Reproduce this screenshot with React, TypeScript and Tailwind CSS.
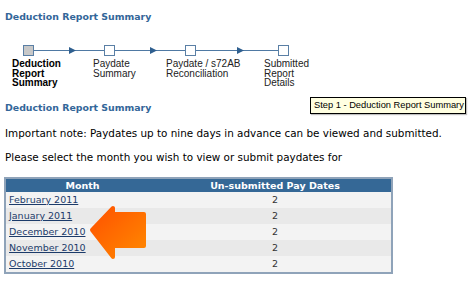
import React from 'react';

const steps = [
  { label: ['Deduction', 'Report', 'Summary'], active: true },
  { label: ['Paydate', 'Summary'], active: false },
  { label: ['Paydate / s72AB', 'Reconciliation'], active: false },
  { label: ['Submitted', 'Report', 'Details'], active: false },
];

const rows = ['February 2011', 'January 2011', 'December 2010', 'November 2010', 'October 2010'];

function Connector({ width }: { width: string }) {
  return (
    <div className={`relative flex items-center h-[11px] ${width}`}>
      <div className="h-px w-full bg-[#4f79a3]" />
      <svg className="absolute left-1/2 top-[2px]" width="7" height="7" viewBox="0 0 7 7">
        <polygon points="0,0 7,3.5 0,7" fill="#2f5f8f" />
      </svg>
    </div>
  );
}

function Square({ active }: { active: boolean }) {
  return (
    <div
      className={`w-[11px] h-[11px] border border-[#5a7fa5] ${active ? 'bg-[#c8c8c8]' : 'bg-white'}`}
    />
  );
}

export default function App() {
  return (
    <div className="relative w-[468px] h-[281px] bg-white overflow-hidden font-['DejaVu_Sans',sans-serif]">
      <div className="pl-[5px] pt-[10px]">
        <h1 className="text-[9.4px] leading-[14px] font-bold text-[#336699]">Deduction Report Summary</h1>

        {/* stepper */}
        <div className="mt-[21px] pl-[18px] flex items-center">
          <Square active />
          <Connector width="w-[70px]" />
          <Square active={false} />
          <Connector width="w-[70px]" />
          <Square active={false} />
          <Connector width="w-[82px]" />
          <Square active={false} />
        </div>
        <div className="mt-[3px] pl-[7px] flex font-['Liberation_Sans',Arial,sans-serif] text-[10px] leading-[9.5px] text-[#222]">
          <div className="w-[81px] font-bold text-black">
            {steps[0].label.map((l) => (
              <div key={l}>{l}</div>
            ))}
          </div>
          <div className="w-[73px]">
            {steps[1].label.map((l) => (
              <div key={l}>{l}</div>
            ))}
          </div>
          <div className="w-[98px]">
            {steps[2].label.map((l) => (
              <div key={l}>{l}</div>
            ))}
          </div>
          <div>
            {steps[3].label.map((l) => (
              <div key={l}>{l}</div>
            ))}
          </div>
        </div>

        <h2 className="mt-[13px] text-[9.4px] leading-[14px] font-bold text-[#336699]">Deduction Report Summary</h2>

        <p className="mt-[11px] text-[10.4px] leading-[14px] text-black">
          Important note: Paydates up to nine days in advance can be viewed and submitted.
        </p>
        <p className="mt-[10px] text-[10.4px] leading-[14px] text-black">
          Please select the month you wish to view or submit paydates for
        </p>
      </div>

      <table className="ml-[4px] mt-[13px] w-[389px] border-collapse border-2 border-[#8fa3b9] text-[9.5px]">
        <thead>
          <tr className="bg-[#356896] text-white h-[14px]">
            <th className="w-[154px] font-bold leading-[13px] p-0">Month</th>
            <th className="font-bold leading-[13px] p-0">Un-submitted Pay Dates</th>
          </tr>
        </thead>
        <tbody>
          {rows.map((m, i) => (
            <tr key={m} className={`h-[16px] ${i % 2 === 0 ? 'bg-[#f3f3f3]' : 'bg-[#e9e9e9]'}`}>
              <td className="pl-[3px] p-0 leading-[16px]">
                <a className="text-[#1c3b6a] underline">{m}</a>
              </td>
              <td className="text-center text-[#333] p-0 leading-[16px]">2</td>
            </tr>
          ))}
        </tbody>
      </table>

      {/* tooltip */}
      <div className="absolute left-[310px] top-[97px] h-[17px] w-[156px] border border-black bg-[#ffffe1] px-[3px] whitespace-nowrap font-['Liberation_Sans',Arial,sans-serif] text-[9.3px] leading-[15px] text-black shadow-[1px_1px_1px_rgba(0,0,0,0.25)]">
        Step 1 - Deduction Report Summary
      </div>

      {/* orange pointer arrow */}
      <svg className="absolute left-[88px] top-[204px]" width="62" height="56" viewBox="0 0 62 56">
        <defs>
          <linearGradient id="og" x1="0" y1="0" x2="1" y2="1">
            <stop offset="0" stopColor="#ff5200" />
            <stop offset="1" stopColor="#ff8800" />
          </linearGradient>
        </defs>
        <polygon
          points="4,26 25,4 25,10 56,10 56,42 25,42 25,53"
          fill="url(#og)"
          stroke="url(#og)"
          strokeWidth="4"
          strokeLinejoin="round"
        />
      </svg>
    </div>
  );
}
